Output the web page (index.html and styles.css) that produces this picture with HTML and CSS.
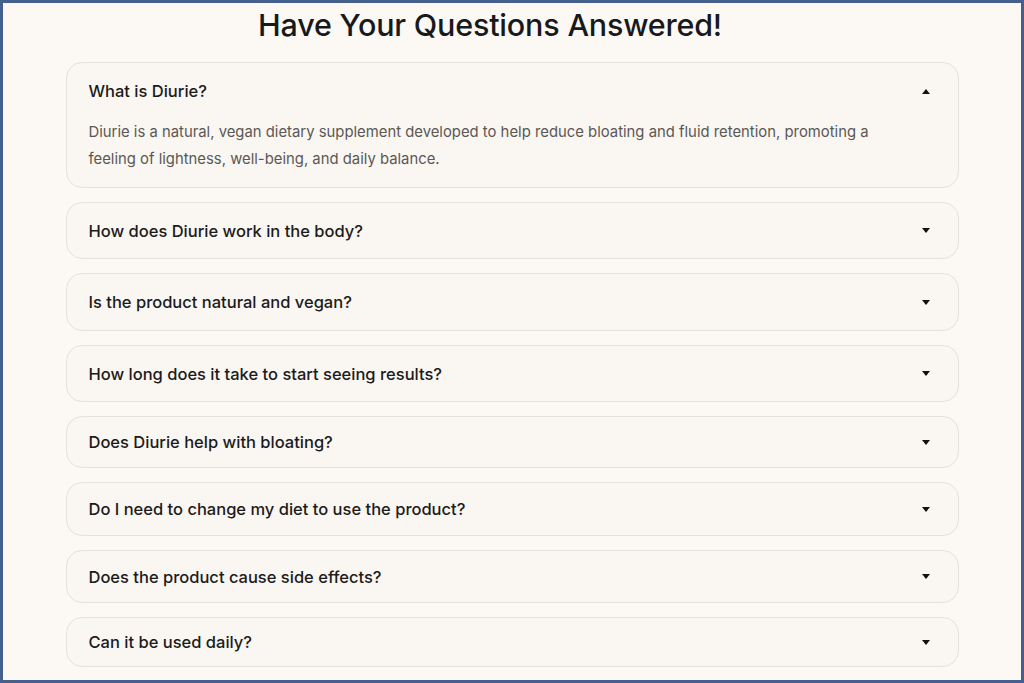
FILE: index.html
```html
<!DOCTYPE html>
<html lang="en">
<head>
<meta charset="utf-8">
<title>FAQ</title>
<link rel="stylesheet" href="styles.css">
</head>
<body>
<div class="frame">
  <h1 class="title">Have Your Questions Answered!</h1>
  <div class="faq">
    <div class="item open">
      <div class="q"><span>What is Diurie?</span><span class="arrow up"></span></div>
      <p class="a">Diurie is a natural, vegan dietary supplement developed to help reduce bloating and fluid retention, promoting a feeling of lightness, well-being, and daily balance.</p>
    </div>
    <div class="item"><div class="q"><span>How does Diurie work in the body?</span><span class="arrow"></span></div></div>
    <div class="item"><div class="q"><span>Is the product natural and vegan?</span><span class="arrow"></span></div></div>
    <div class="item"><div class="q"><span>How long does it take to start seeing results?</span><span class="arrow"></span></div></div>
    <div class="item"><div class="q"><span>Does Diurie help with bloating?</span><span class="arrow"></span></div></div>
    <div class="item"><div class="q"><span>Do I need to change my diet to use the product?</span><span class="arrow"></span></div></div>
    <div class="item"><div class="q"><span>Does the product cause side effects?</span><span class="arrow"></span></div></div>
    <div class="item"><div class="q"><span>Can it be used daily?</span><span class="arrow"></span></div></div>
  </div>
</div>
</body>
</html>
```
FILE: styles.css
```css
html, body { margin: 0; padding: 0; }
body {
  background: #fcf9f5;
  font-family: Inter, "Noto Sans", sans-serif;
  color: #1b1b1b;
}
.frame {
  box-sizing: border-box;
  width: 1024px;
  height: 683px;
  border: 3px solid #46608e;
  overflow: hidden;
  background: #fcf9f5;
}
.title {
  margin: 2px 0 0;
  padding-right: 44px;
  height: 57px;
  text-align: center;
  font-size: 30.5px;
  font-weight: 500;
  letter-spacing: -0.2px;
  line-height: 40px;
  color: #17191c;
}
.faq {
  width: 893px;
  margin: 0 auto;
  display: flex;
  flex-direction: column;
  gap: 14px;
}
.item {
  box-sizing: border-box;
  height: 57px;
  border: 1px solid #e6e1da;
  border-radius: 16px;
  background: #faf6f1;
  padding: 0 28px 0 22px;
  display: flex;
  flex-direction: column;
  justify-content: center;
}
.item.open { height: 126px; justify-content: flex-start; }
.item:nth-child(3) { height: 58px; }
.item:nth-child(4) { height: 57px; }
.item:nth-child(5) { height: 52px; }
.item:nth-child(6) { height: 54px; }
.item:nth-child(7) { height: 53px; }
.item:nth-child(8) { height: 50px; }
.q {
  display: flex;
  align-items: center;
  justify-content: space-between;
  font-size: 16.5px;
  font-weight: 500;
  line-height: 24px;
  color: #1b1b1b;
}
.open .q { height: 56px; }
.arrow {
  width: 0; height: 0;
  border-left: 4px solid transparent;
  border-right: 4px solid transparent;
  border-top: 5px solid #111;
}
.arrow.up {
  border-top: 0;
  border-bottom: 5px solid #111;
}
.a {
  margin: 0;
  max-width: 800px;
  font-size: 14.85px;
  line-height: 27px;
  color: #5a5855;
}
```
